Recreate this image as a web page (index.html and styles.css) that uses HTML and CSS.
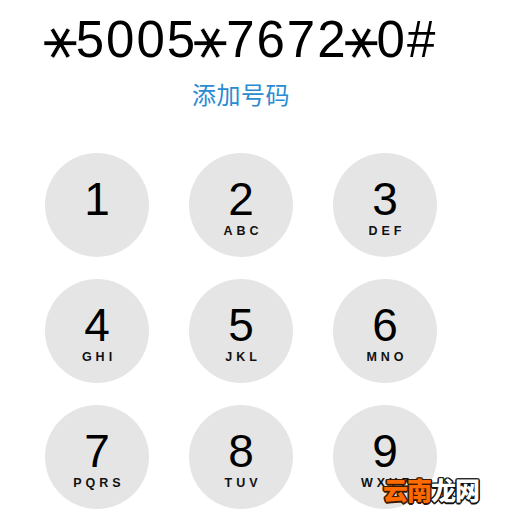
FILE: index.html
```html
<!DOCTYPE html>
<html lang="zh">
<head>
<meta charset="utf-8">
<title>拨号</title>
<link rel="stylesheet" href="styles.css">
</head>
<body>
<div class="screen">
  <div class="number"><span class="star"><span class="glyph">∗</span></span>5005<span class="star"><span class="glyph">∗</span></span>7672<span class="star"><span class="glyph">∗</span></span>0#</div>
  <div class="add">添加号码</div>
  <div class="pad">
    <div class="key"><div class="digit">1</div><div class="letters"></div></div>
    <div class="key"><div class="digit">2</div><div class="letters">ABC</div></div>
    <div class="key"><div class="digit">3</div><div class="letters">DEF</div></div>
    <div class="key"><div class="digit">4</div><div class="letters">GHI</div></div>
    <div class="key"><div class="digit">5</div><div class="letters">JKL</div></div>
    <div class="key"><div class="digit">6</div><div class="letters">MNO</div></div>
    <div class="key"><div class="digit">7</div><div class="letters">PQRS</div></div>
    <div class="key"><div class="digit">8</div><div class="letters">TUV</div></div>
    <div class="key"><div class="digit">9</div><div class="letters">WXYZ</div></div>
  </div>
</div>
<div class="mark"><span class="orange">云南</span><span class="white">龙网</span></div>
</body>
</html>
```

FILE: styles.css
```css
html, body {
  margin: 0;
  padding: 0;
  background: #ffffff;
}
body {
  width: 516px;
  height: 522px;
  overflow: hidden;
  position: relative;
  font-family: "Liberation Sans", Arial, sans-serif;
  color: #000;
}
.screen {
  width: 392px;
  padding-left: 45px;
  padding-top: 14px;
  display: flex;
  flex-direction: column;
  align-items: center;
}
.number {
  font-size: 51px;
  line-height: 52px;
  height: 52px;
  letter-spacing: 2px;
  white-space: nowrap;
  margin-right: -2px;
}
.star {
  display: inline-block;
  width: 29px;
  height: 52px;
  vertical-align: top;
  letter-spacing: 0;
}
.glyph {
  display: flex;
  justify-content: center;
  align-items: center;
  width: 29px;
  height: 52px;
  font-family: "DejaVu Sans", sans-serif;
  font-size: 52px;
  line-height: 52px;
  -webkit-text-stroke: 0.5px #ffffff;
  transform: translateY(3px) rotate(90deg);
}
.add {
  margin-top: 16px;
  font-family: "Noto Sans CJK SC", sans-serif;
  font-size: 24px;
  line-height: 24px;
  color: #2a8bd3;
  letter-spacing: 0.5px;
}
.pad {
  margin-top: 47px;
  display: grid;
  grid-template-columns: repeat(3, 104px);
  grid-auto-rows: 104px;
  column-gap: 40px;
  row-gap: 22px;
}
.key {
  width: 104px;
  height: 104px;
  border-radius: 50%;
  background: #e5e5e5;
  display: flex;
  flex-direction: column;
  align-items: center;
  padding-top: 23px;
  box-sizing: border-box;
}
.digit {
  font-size: 46px;
  line-height: 46px;
  height: 46px;
}
.letters {
  margin-top: 2px;
  height: 14px;
  font-size: 12.5px;
  line-height: 14px;
  font-weight: bold;
  letter-spacing: 4px;
  padding-left: 4px;
  color: #111;
}
.mark {
  position: absolute;
  left: 383px;
  top: 477px;
  font-family: "Noto Sans CJK SC", sans-serif;
  font-weight: 900;
  font-size: 25px;
  line-height: 25px;
  letter-spacing: -1px;
  white-space: nowrap;
}
.orange {
  color: #ff6a00;
  text-shadow: -1.5px 0 #3a1a00, 1.5px 0 #3a1a00, 0 -1.5px #3a1a00, 0 1.5px #3a1a00, -1px -1px #3a1a00, 1px 1px #3a1a00, -1px 1px #3a1a00, 1px -1px #3a1a00;
}
.white {
  color: #ffffff;
  text-shadow: -1.5px 0 #111, 1.5px 0 #111, 0 -1.5px #111, 0 1.5px #111, -1px -1px #111, 1px 1px #111, -1px 1px #111, 1px -1px #111;
}
```
